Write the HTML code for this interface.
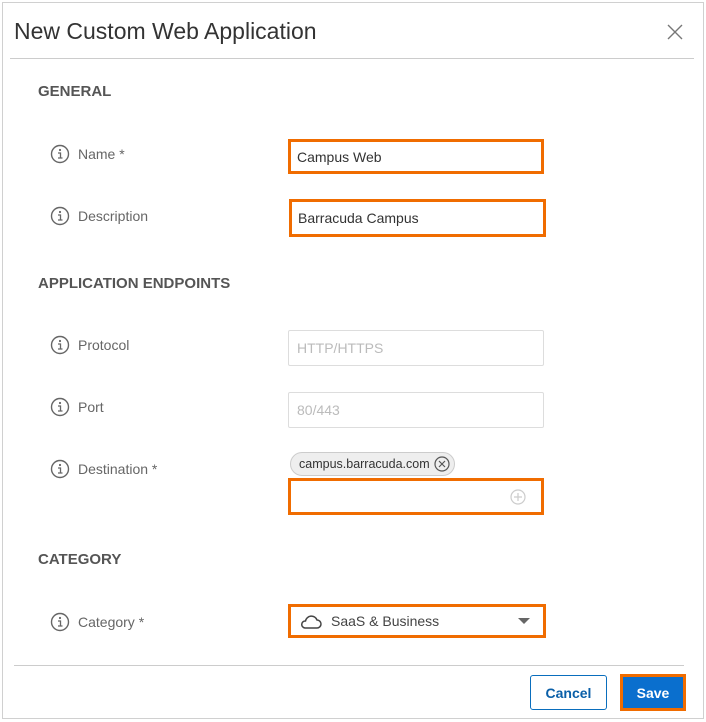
<!DOCTYPE html>
<html><head><style>
*{box-sizing:border-box;margin:0;padding:0}
body{width:706px;height:722px;background:#fff;font-family:"Liberation Sans",sans-serif;position:relative;overflow:hidden;color:#555}
.a{position:absolute}
.frame{left:2px;top:2px;width:702px;height:717px;border:1px solid #d0d0d0}
.title{left:14px;top:18px;font-size:23px;color:#333}
.hr{height:1px;background:#ccc}
.sec{left:38px;font-size:15px;font-weight:bold;color:#555}
.lbl{left:50px;font-size:14px;color:#666;display:flex;align-items:center}
.lbl svg{margin-right:8px}
.box{border:3px solid #f06c00;font-size:14px;color:#333;padding-left:6px;display:flex;align-items:center}
.gbox{border:1px solid #ddd;border-radius:2px;font-size:14px;color:#bbb;padding-left:8px;display:flex;align-items:center}
</style></head><body>
<div class="a frame"></div>
<div class="a title">New Custom Web Application</div>
<svg class="a" style="left:667px;top:24px" width="16" height="16"><path d="M1 1L15 15M15 1L1 15" stroke="#777" stroke-width="1.4"/></svg>
<div class="a hr" style="left:10px;top:58px;width:684px"></div>
<div class="a sec" style="top:83px">GENERAL</div>
<div class="a sec" style="top:275px">APPLICATION ENDPOINTS</div>
<div class="a sec" style="top:551px">CATEGORY</div>

<svg width="0" height="0" style="position:absolute"><defs><g id="i"><circle cx="10" cy="10" r="8.5" fill="none" stroke="#666" stroke-width="1.4"/><circle cx="10" cy="6" r="1.1" fill="#666"/><path d="M8 9h2.5v5M8 14h4.5" fill="none" stroke="#666" stroke-width="1.3"/></g></defs></svg>

<div class="a lbl" style="top:144px"><svg width="20" height="20"><use href="#i"/></svg>Name *</div>
<div class="a lbl" style="top:206px"><svg width="20" height="20"><use href="#i"/></svg>Description</div>
<div class="a lbl" style="top:335px"><svg width="20" height="20"><use href="#i"/></svg>Protocol</div>
<div class="a lbl" style="top:397px"><svg width="20" height="20"><use href="#i"/></svg>Port</div>
<div class="a lbl" style="top:459px"><svg width="20" height="20"><use href="#i"/></svg>Destination *</div>
<div class="a lbl" style="top:612px"><svg width="20" height="20"><use href="#i"/></svg>Category *</div>

<div class="a box" style="left:288px;top:139px;width:256px;height:35px">Campus Web</div>
<div class="a box" style="left:289px;top:199px;width:257px;height:38px">Barracuda Campus</div>
<div class="a gbox" style="left:288px;top:330px;width:256px;height:36px">HTTP/HTTPS</div>
<div class="a gbox" style="left:288px;top:392px;width:256px;height:36px">80/443</div>
<div class="a" style="left:290px;top:452px;width:165px;height:24px;border:1px solid #ccc;border-radius:12px;background:#eee;font-size:12.5px;color:#333;display:flex;align-items:center;padding-left:8px">campus.barracuda.com<svg style="margin-left:4px" width="16" height="16"><circle cx="8" cy="8" r="7" fill="none" stroke="#555" stroke-width="1.2"/><path d="M5 5L11 11M11 5L5 11" stroke="#555" stroke-width="1.2"/></svg></div>
<div class="a box" style="left:288px;top:478px;width:256px;height:37px"></div>
<svg class="a" style="left:510px;top:489px" width="16" height="16"><circle cx="8" cy="8" r="7" fill="none" stroke="#ccc" stroke-width="1.2"/><path d="M8 4V12M4 8H12" stroke="#ccc" stroke-width="1.2"/></svg>
<div class="a box" style="left:288px;top:604px;width:258px;height:34px;color:#444;padding-left:8px"><svg width="24" height="18" style="margin-right:8px"><path d="M6 16h12a4 4 0 0 0 0-8 6 6 0 0 0-11.5 1A3.5 3.5 0 0 0 6 16z" fill="none" stroke="#444" stroke-width="1.5"/></svg>SaaS &amp; Business</div>
<svg class="a" style="left:518px;top:618px" width="12" height="7"><path d="M0 0H12L6 6z" fill="#666"/></svg>

<div class="a hr" style="left:14px;top:665px;width:670px"></div>
<div class="a" style="left:530px;top:675px;width:77px;height:35px;border:1px solid #0a6ebd;border-radius:3px;color:#0a5fa8;font-weight:bold;font-size:14px;display:flex;align-items:center;justify-content:center">Cancel</div>
<div class="a" style="left:620px;top:674px;width:66px;height:37px;border:3px solid #f06c00;background:#0a6fce;color:#fff;font-weight:bold;font-size:14px;display:flex;align-items:center;justify-content:center">Save</div>
</body></html>
